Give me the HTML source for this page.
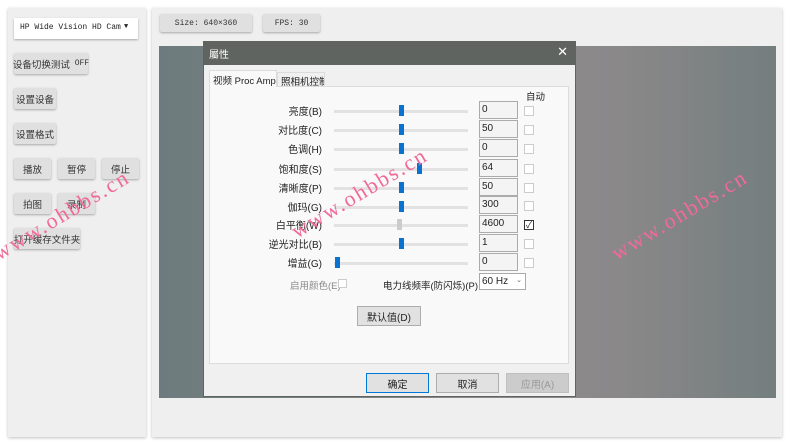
<!DOCTYPE html>
<html><head><meta charset="utf-8"><style>
*{box-sizing:border-box;margin:0;padding:0}
body{width:790px;height:446px;background:#fff;position:relative;overflow:hidden;font-family:"Liberation Sans","Noto Sans CJK SC",sans-serif;font-size:9px;color:#222}
div{white-space:nowrap}
.a{position:absolute}
.panel{background:#efefef;box-shadow:0 1px 3px rgba(0,0,0,.25)}
.btn{position:absolute;background:#e0e0e0;box-shadow:0 1px 2px rgba(0,0,0,.3);border-radius:2px;font-size:9.5px;display:flex;align-items:center;justify-content:center;color:#333;height:21px}
.mono{font-family:"Liberation Mono","Noto Sans CJK SC",monospace;font-size:8px}
.lbl{position:absolute;right:468px;width:100px;text-align:right;font-size:10px}
.trk{position:absolute;left:334px;width:134px;height:3px;background:#e2e2e2}
.th{position:absolute;width:5px;height:11px;background:#0a72d0}
.ed{position:absolute;left:479px;width:39px;height:18px;background:#f4f4f4;border:1px solid #ababab;font-size:10px;padding:2px 0 0 2px}
.cb{position:absolute;left:524px;width:10px;height:10px;background:#fff;border:1px solid #ccc}
.wbtn{position:absolute;height:20px;background:#e1e1e1;border:1px solid #adadad;font-size:10px;display:flex;align-items:center;justify-content:center}
.wm{position:absolute;color:#f06a9a;font-family:"Liberation Serif",serif;font-size:22px;letter-spacing:2px;transform:rotate(-31deg);transform-origin:left bottom;white-space:nowrap}
</style></head><body>
<div class="a panel" style="left:8px;top:8px;width:138px;height:429px"></div>
<div class="a panel" style="left:152px;top:8px;width:630px;height:429px"></div>

<div class="a mono" style="left:14px;top:18px;width:124px;height:21px;background:#fff;box-shadow:0 1px 2px rgba(0,0,0,.3);padding:5px 0 0 6px">HP Wide Vision HD Cam <span style="position:absolute;left:110px;top:5px;font-size:7px">▼</span></div>
<div class="btn" style="left:14px;top:53px;width:74px">设备切换测试 <span class="mono">&nbsp;OFF</span></div>
<div class="btn" style="left:14px;top:88px;width:42px">设置设备</div>
<div class="btn" style="left:14px;top:123px;width:42px">设置格式</div>
<div class="btn" style="left:14px;top:158px;width:37px">播放</div>
<div class="btn" style="left:58px;top:158px;width:37px">暂停</div>
<div class="btn" style="left:102px;top:158px;width:37px">停止</div>
<div class="btn" style="left:14px;top:193px;width:37px">拍图</div>
<div class="btn" style="left:58px;top:193px;width:37px">录制</div>
<div class="btn" style="left:14px;top:228px;width:66px">打开缓存文件夹</div>

<div class="btn mono" style="left:160px;top:14px;width:92px;height:18px">Size: 640×360</div>
<div class="btn mono" style="left:263px;top:14px;width:57px;height:18px">FPS: 30</div>

<div class="a" style="left:159px;top:46px;width:617px;height:352px;background:linear-gradient(90deg,#6d7b7e 0%,#78817f 25%,#8e8b8d 55%,#8a8889 75%,#747e7e 100%)"></div>

<!-- dialog -->
<div class="a" style="left:203px;top:41px;width:373px;height:356px;background:#f0f0f0;border:1px solid #5f6461"></div>
<div class="a" style="left:203px;top:41px;width:373px;height:24px;background:#5f6461;color:#fff;font-size:10px;padding:5px 0 0 6px">屬性<span style="position:absolute;right:8px;top:3px;font-size:13px">✕</span></div>
<div class="a" style="left:209px;top:86px;width:360px;height:278px;background:#f9f9f9;border:1px solid #dcdcdc"></div>
<div class="a" style="left:209px;top:70px;width:68px;height:17px;background:#f9f9f9;border:1px solid #dcdcdc;border-bottom:none;font-size:9.5px;padding:2px 0 0 3px">视频 Proc Amp</div>
<div class="a" style="left:277px;top:72px;width:48px;height:14px;background:#f0f0f0;border:1px solid #dcdcdc;border-bottom:none;font-size:9.5px;padding:1px 0 0 3px;overflow:hidden">照相机控制</div>
<div class="a" style="left:526px;top:89px;font-size:9.5px">自动</div>

<div class="lbl" style="top:103px">亮度(B)</div><div class="trk" style="top:110px"></div><div class="th" style="left:399px;top:105px"></div><div class="ed" style="top:101px">0</div><div class="cb" style="top:106px"></div>
<div class="lbl" style="top:122px">对比度(C)</div><div class="trk" style="top:129px"></div><div class="th" style="left:399px;top:124px"></div><div class="ed" style="top:120px">50</div><div class="cb" style="top:125px"></div>
<div class="lbl" style="top:141px">色调(H)</div><div class="trk" style="top:148px"></div><div class="th" style="left:399px;top:143px"></div><div class="ed" style="top:139px">0</div><div class="cb" style="top:144px"></div>
<div class="lbl" style="top:161px">饱和度(S)</div><div class="trk" style="top:168px"></div><div class="th" style="left:417px;top:163px"></div><div class="ed" style="top:159px">64</div><div class="cb" style="top:164px"></div>
<div class="lbl" style="top:180px">清晰度(P)</div><div class="trk" style="top:187px"></div><div class="th" style="left:399px;top:182px"></div><div class="ed" style="top:178px">50</div><div class="cb" style="top:183px"></div>
<div class="lbl" style="top:199px">伽玛(G)</div><div class="trk" style="top:206px"></div><div class="th" style="left:399px;top:201px"></div><div class="ed" style="top:196px">300</div><div class="cb" style="top:201px"></div>
<div class="lbl" style="top:217px">白平衡(W)</div><div class="trk" style="top:224px"></div><div class="th" style="left:397px;top:219px;background:#ccc"></div><div class="ed" style="top:215px">4600</div><div class="cb" style="top:220px;border-color:#333;font-size:9px;line-height:8px;text-align:center">✓</div>
<div class="lbl" style="top:236px">逆光对比(B)</div><div class="trk" style="top:243px"></div><div class="th" style="left:399px;top:238px"></div><div class="ed" style="top:234px">1</div><div class="cb" style="top:239px"></div>
<div class="lbl" style="top:255px">增益(G)</div><div class="trk" style="top:262px"></div><div class="th" style="left:335px;top:257px"></div><div class="ed" style="top:253px">0</div><div class="cb" style="top:258px"></div>

<div class="a" style="left:290px;top:278px;font-size:9.5px;color:#888">启用颜色(E)</div><div class="a" style="left:338px;top:279px;width:9px;height:9px;background:#fff;border:1px solid #ccc"></div>
<div class="a" style="left:383px;top:278px;font-size:9.5px">电力线频率(防闪烁)(P)</div>
<div class="a" style="left:479px;top:273px;width:47px;height:17px;background:#fff;border:1px solid #aaa;font-size:10px;padding:2px 0 0 2px">60 Hz<span style="position:absolute;right:3px;top:2px;font-size:7px;color:#666">⌄</span></div>
<div class="wbtn" style="left:357px;top:306px;width:64px">默认值(D)</div>

<div class="wbtn" style="left:366px;top:373px;width:63px;border:1px solid #0078d7">确定</div>
<div class="wbtn" style="left:436px;top:373px;width:63px">取消</div>
<div class="wbtn" style="left:506px;top:373px;width:63px;background:#ccc;border-color:#bfbfbf;color:#999">应用(A)</div>

<div class="wm" style="left:2px;top:240px">www.ohbbs.cn</div>
<div class="wm" style="left:300px;top:218px">www.ohbbs.cn</div>
<div class="wm" style="left:620px;top:240px">www.ohbbs.cn</div>
</body></html>
